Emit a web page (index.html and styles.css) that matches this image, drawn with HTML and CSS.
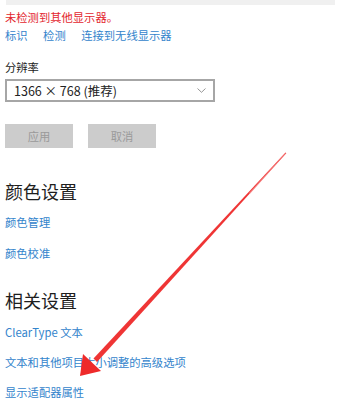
FILE: index.html
```html
<!DOCTYPE html>
<html lang="zh-CN">
<head>
<meta charset="utf-8">
<link rel="stylesheet" href="styles.css">
</head>
<body>
<div class="page">
  <div class="topbar"></div>
  <div class="warn">未检测到其他显示器。</div>
  <div class="links">
    <span class="link">标识</span>
    <span class="link">检测</span>
    <span class="link">连接到无线显示器</span>
  </div>
  <div class="label">分辨率</div>
  <div class="select">
    <span class="select-text">1366 × 768 (推荐)</span>
    <svg class="chev" width="9" height="5" viewBox="0 0 9 5"><path d="M0.5 0.5 L4.5 4.3 L8.5 0.5" fill="none" stroke="#8a8a8a" stroke-width="0.9"/></svg>
  </div>
  <div class="buttons">
    <div class="btn">应用</div>
    <div class="btn">取消</div>
  </div>
  <div class="heading h1">颜色设置</div>
  <div class="item i1">颜色管理</div>
  <div class="item i2">颜色校准</div>
  <div class="heading h2">相关设置</div>
  <div class="item i3">ClearType 文本</div>
  <div class="item i4">文本和其他项目大小调整的高级选项</div>
  <div class="item i5">显示适配器属性</div>
  <svg class="arrow" width="338" height="402" viewBox="0 0 338 402">
    <polygon points="285.5,152.5 286.3,153.3 97,362 93.5,358.5" fill="#ee2a2a" opacity="0.95"/>
    <polygon points="285.5,152.5 286,153 250,194 249,193" fill="#f7a0a0" opacity="0.6"/>
    <polygon points="80,376 83,354 101,371" fill="#ee2a2a"/>
  </svg>
</div>
</body>
</html>
```
FILE: styles.css
```css
html, body {
  margin: 0;
  padding: 0;
  background: #ffffff;
}
body {
  width: 338px;
  height: 402px;
  overflow: hidden;
  font-family: "Noto Sans CJK SC", "Noto Sans", sans-serif;
}
.page {
  position: relative;
  width: 338px;
  height: 402px;
  padding-left: 5px;
  box-sizing: border-box;
}
.topbar {
  height: 5px;
  margin-left: 1px;
  width: 329px;
  background: #f0f0f0;
}
.warn {
  margin-top: 4px;
  font-size: 11.3px;
  line-height: 16px;
  color: #e3262e;
}
.links {
  margin-top: 2px;
  display: flex;
  gap: 15.5px;
  font-size: 11.3px;
  line-height: 16px;
}
.link, .item {
  color: #3384cc;
}
.label {
  margin-top: 16px;
  font-size: 11.3px;
  line-height: 16px;
  color: #222;
}
.select {
  margin-top: 3.5px;
  width: 210px;
  height: 23px;
  box-sizing: border-box;
  border: 2px solid #a6a6a6;
  display: flex;
  align-items: center;
  justify-content: space-between;
  padding: 0 7px 0 7px;
}
.select-text {
  font-size: 12.5px;
  color: #222;
  line-height: 19px;
}
.chev {
  display: block;
}
.buttons {
  margin-top: 22px;
  display: flex;
  gap: 15px;
}
.btn {
  width: 68px;
  height: 24px;
  background: #cccccc;
  color: #9a9a9a;
  font-size: 11.3px;
  display: flex;
  align-items: center;
  justify-content: center;
}
.heading {
  font-size: 18px;
  line-height: 28px;
  color: #1e1e1e;
}
.h1 { margin-top: 29.5px; }
.h2 { margin-top: 24.5px; }
.item {
  font-size: 11.3px;
  line-height: 16px;
}
.i1 { margin-top: 8.5px; }
.i2 { margin-top: 15.5px; }
.i3 { margin-top: 10.5px; }
.i4 { margin-top: 13.5px; }
.i5 { margin-top: 14.5px; }
.arrow {
  position: absolute;
  left: 0;
  top: 0;
  pointer-events: none;
}
```
